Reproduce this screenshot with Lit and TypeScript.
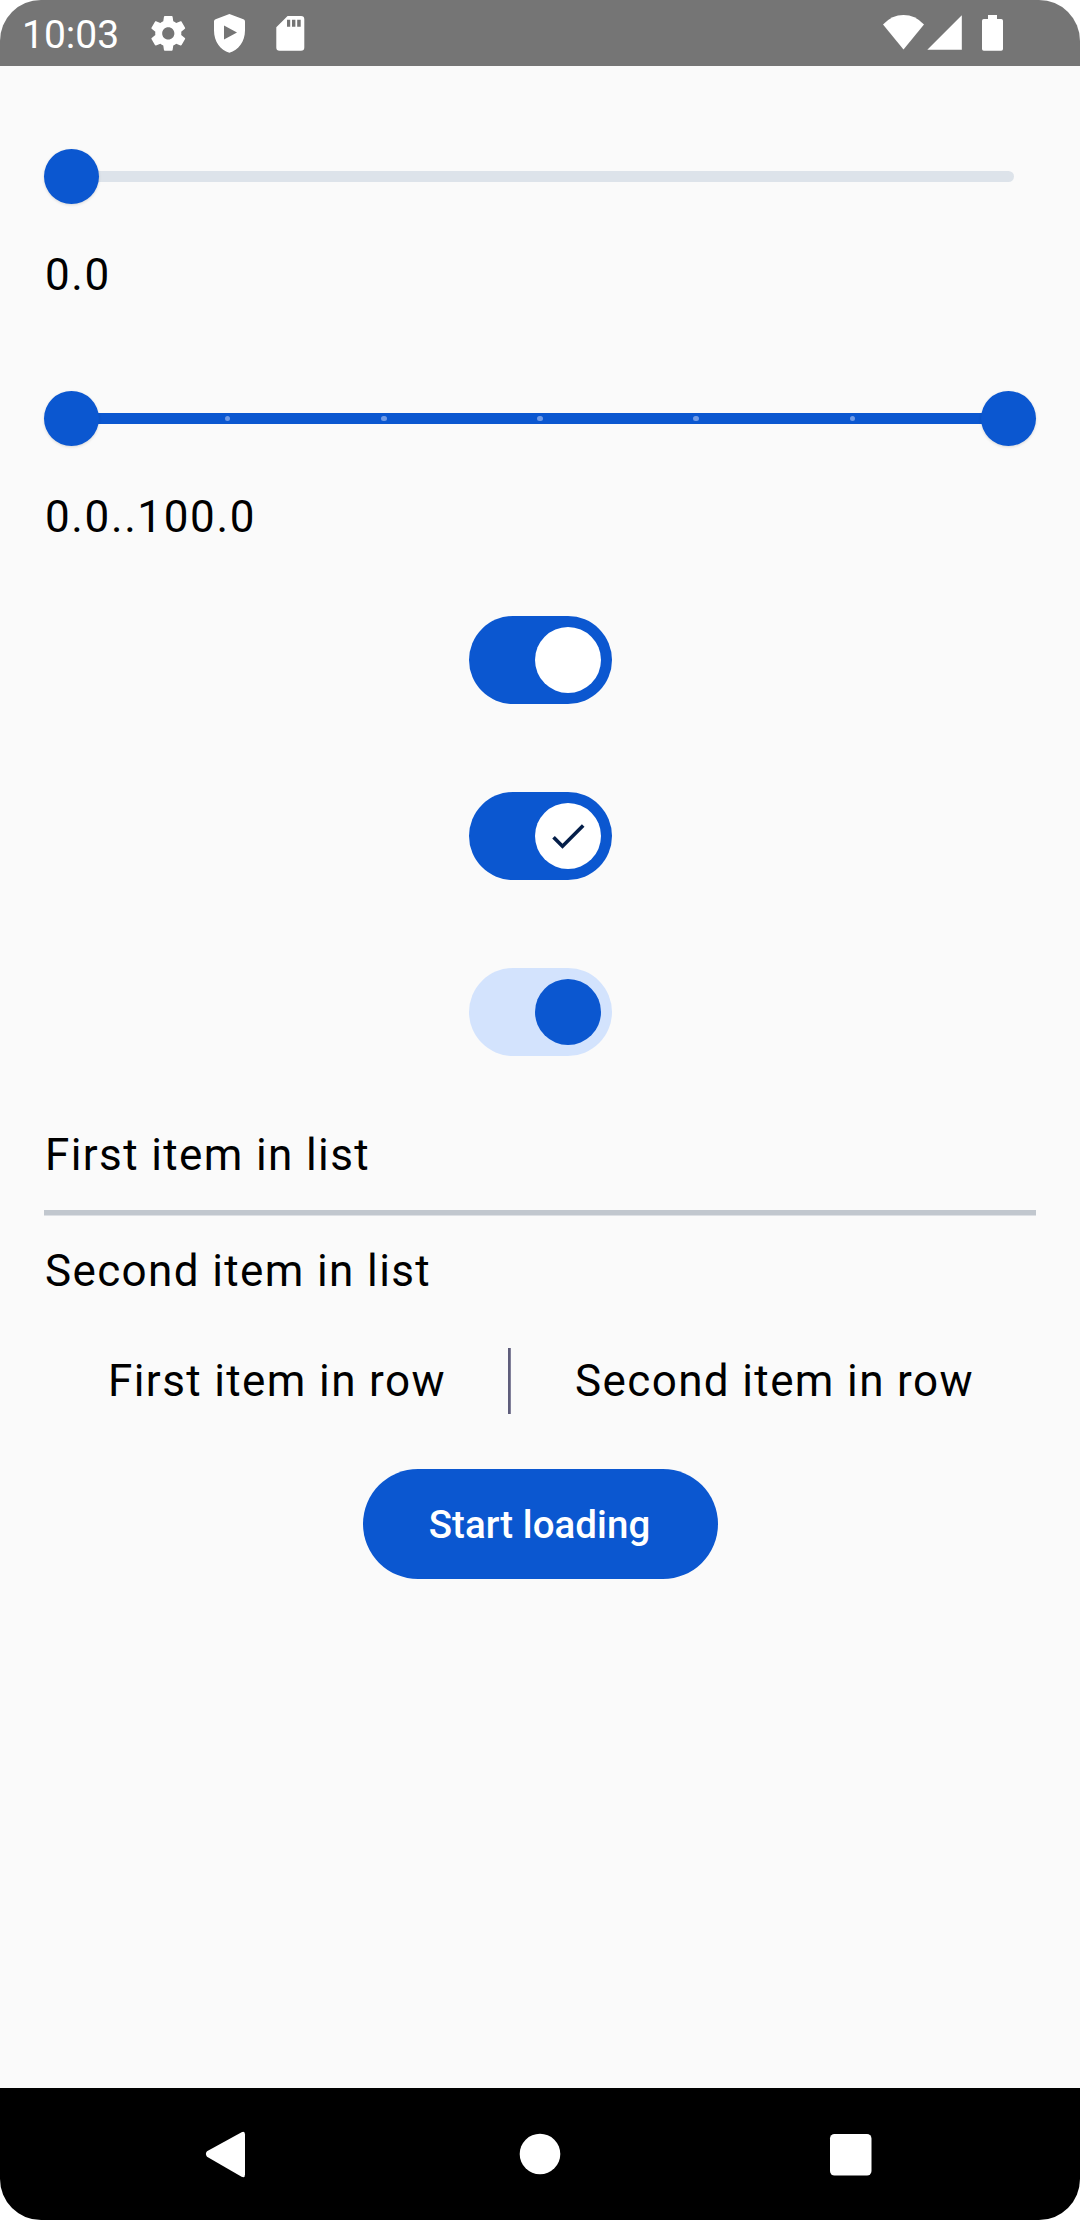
import { LitElement, html, css, svg, nothing } from "lit";
import { customElement, property } from "lit/decorators.js";

@customElement("status-bar")
class StatusBar extends LitElement {
  static styles = css`
    :host {
      display: flex;
      justify-content: space-between;
      height: 66px;
      background: #757575;
      color: #fff;
      padding: 0 76px 0 22px;
    }
    .group {
      display: flex;
      align-items: center;
    }
    .time {
      font-size: 39px;
      line-height: 60px;
      padding-top: 3px;
      width: 125px;
      white-space: nowrap;
    }
    svg {
      display: block;
      fill: #fff;
    }
  `;
  render() {
    return html`
      <div class="group">
        <span class="time">10:03</span>
        <svg width="165" height="66" viewBox="147 0 165 66">
          <path
            transform="translate(147.4 12.5) scale(1.74)"
            d="M19.43 12.98c.04-.32.07-.64.07-.98s-.03-.66-.07-.98l2.11-1.65c.19-.15.24-.42.12-.64l-2-3.46c-.12-.22-.39-.3-.61-.22l-2.49 1c-.52-.4-1.08-.73-1.69-.98l-.38-2.65C14.46 2.18 14.25 2 14 2h-4c-.25 0-.46.18-.49.42l-.38 2.65c-.61.25-1.17.59-1.69.98l-2.49-1c-.23-.09-.49 0-.61.22l-2 3.46c-.13.22-.07.49.12.64l2.11 1.65c-.04.32-.07.65-.07.98s.03.66.07.98l-2.11 1.65c-.19.15-.24.42-.12.64l2 3.46c.12.22.39.3.61.22l2.49-1c.52.4 1.08.73 1.69.98l.38 2.65c.03.24.24.42.49.42h4c.25 0 .46-.18.49-.42l.38-2.65c.61-.25 1.17-.59 1.69-.98l2.49 1c.23.09.49 0 .61-.22l2-3.46c.12-.22.07-.49-.12-.64l-2.11-1.65zM12 15.5c-1.93 0-3.5-1.57-3.5-3.5s1.57-3.5 3.5-3.5 3.5 1.57 3.5 3.5-1.57 3.5-3.5 3.5z"
          />
          <path
            fill-rule="evenodd"
            d="M229.4 14 L243.4 19.2 Q245 19.8 245 21.5 V30.5 C245 41.5 238.5 50 229.4 52.7 C220.3 50 214 41.5 214 30.5 V21.5 Q214 19.8 215.6 19.2 Z M224 25.6 V39.4 L237 32.5 Z"
          />
          <path
            fill-rule="evenodd"
            d="M287.6 16 H301 Q304.3 16 304.3 19.3 V47.4 Q304.3 50.7 301 50.7 H279.6 Q276.3 50.7 276.3 47.4 V27.3 Z M287 19.7 V26.7 H290.2 V19.7 Z M292 19.7 V26.7 H295.4 V19.7 Z M297.2 19.7 V26.7 H300.7 V19.7 Z"
          />
        </svg>
      </div>
      <svg width="124" height="66" viewBox="880 0 124 66">
        <path d="M903.5 49.6 L883 24.4 Q892 15 903.5 15 Q915 15 924 24.4 Z" />
        <path d="M961.8 15.3 V49.8 H927.3 Z" />
        <path
          d="M988 15 H997 V19 H1001.2 Q1003 19 1003 20.8 V48.9 Q1003 50.7 1001.2 50.7 H983.8 Q982 50.7 982 48.9 V20.8 Q982 19 983.8 19 H988 Z"
        />
      </svg>
    `;
  }
}

@customElement("ui-slider")
class UiSlider extends LitElement {
  @property({ type: Boolean }) range = false;
  @property({ type: Number }) steps = 0;

  static styles = css`
    :host {
      display: grid;
      height: 133px;
      margin-bottom: -1px;
      align-items: center;
    }
    .track,
    .ticks,
    .thumbs {
      grid-area: 1 / 1;
      display: flex;
      align-items: center;
    }
    .track {
      height: 11px;
      margin: 0 22px;
      border-radius: 5.5px;
      background: #dde3ea;
    }
    .track.active {
      background: #0b57d0;
    }
    .ticks {
      margin: 0 24.75px;
      justify-content: space-between;
    }
    .tick {
      width: 5.5px;
      height: 5.5px;
      border-radius: 50%;
      background: #6f9ae6;
    }
    .thumbs {
      justify-content: space-between;
      z-index: 1;
    }
    .thumb {
      width: 55px;
      height: 55px;
      border-radius: 50%;
      background: #0b57d0;
      box-shadow: 0 1px 3px rgba(0, 0, 0, 0.14);
    }
  `;
  render() {
    const ticks = this.steps ? Array.from({ length: this.steps + 2 }) : [];
    return html`
      <div class="track ${this.range ? "active" : ""}"></div>
      <div class="ticks">${ticks.map(() => html`<i class="tick"></i>`)}</div>
      <div class="thumbs">
        <div class="thumb"></div>
        ${this.range ? html`<div class="thumb"></div>` : nothing}
      </div>
    `;
  }
}

@customElement("ui-switch")
class UiSwitch extends LitElement {
  @property({ type: Boolean }) icon = false;
  @property({ type: Boolean }) tonal = false;

  static styles = css`
    :host {
      display: flex;
      justify-content: center;
      padding: 22px 0 22px 1px;
    }
    .track {
      box-sizing: border-box;
      width: 143px;
      height: 88px;
      padding: 11px;
      border-radius: 44px;
      background: #0b57d0;
      display: flex;
      justify-content: flex-end;
    }
    .thumb {
      width: 66px;
      height: 66px;
      border-radius: 50%;
      background: #fff;
      display: flex;
      align-items: center;
      justify-content: center;
    }
    .tonal {
      background: #d3e3fd;
    }
    .tonal .thumb {
      background: #0b57d0;
    }
    svg {
      width: 44px;
      height: 44px;
      fill: #041e49;
    }
  `;
  render() {
    return html`<div class="track ${this.tonal ? "tonal" : ""}">
      <div class="thumb">
        ${this.icon
          ? html`<svg viewBox="0 0 24 24">
              ${svg`<path d="M9 16.17 4.83 12l-1.42 1.41L9 19 21 7l-1.41-1.41z" />`}
            </svg>`
          : nothing}
      </div>
    </div>`;
  }
}

@customElement("nav-bar")
class NavBar extends LitElement {
  static styles = css`
    :host {
      display: flex;
      justify-content: center;
      height: 132px;
      background: #000;
    }
    svg {
      display: block;
      fill: #fff;
    }
  `;
  render() {
    return html`<svg width="1080" height="132" viewBox="0 0 1080 132">
      <path
        d="M207 63.3 L241.6 44.2 Q245 42.6 245 46.5 V86.5 Q245 90.4 241.6 88.8 L207 68.7 Q204.8 66 207 63.3 Z"
      />
      <circle cx="540" cy="66" r="20.3" />
      <rect x="830" y="46" width="41.5" height="41.5" rx="4.5" />
    </svg>`;
  }
}

@customElement("app-root")
class AppRoot extends LitElement {
  static styles = css`
    :host {
      display: flex;
      flex-direction: column;
      width: 1080px;
      height: 2220px;
      border-radius: 41px;
      overflow: hidden;
      background: #fafafa;
      color: #000;
      font-family: Roboto, sans-serif;
    }
    main {
      flex: 1;
      display: flex;
      flex-direction: column;
      gap: 44px;
      padding: 44px;
    }
    .text {
      font-size: 44px;
      line-height: 66px;
      letter-spacing: 1.375px;
      white-space: nowrap;
      padding-left: 1px;
      margin-right: -1px;
    }
    .value {
      letter-spacing: 1.62px;
    }
    .list {
      display: flex;
      flex-direction: column;
      gap: 22px;
    }
    .rule {
      height: 6px;
      background: linear-gradient(#c1c7ce 5px, #dde0e4 5px);
    }
    .row {
      display: flex;
      justify-content: space-evenly;
    }
    .bar {
      width: 3px;
      background: linear-gradient(90deg, #5e5d7b 2px, #82819a 2px);
    }
    .button {
      align-self: center;
      box-sizing: border-box;
      width: 355px;
      height: 110px;
      margin: 11px 0 11px 1px;
      padding: 0 2px 0 0;
      border: 0;
      border-radius: 55px;
      background: #0b57d0;
      color: #fff;
      font: 500 38.5px/55px Roboto, sans-serif;
      letter-spacing: 0.05px;
    }
  `;
  render() {
    return html`
      <status-bar></status-bar>
      <main>
        <div>
          <ui-slider></ui-slider>
          <div class="text value">0.0</div>
        </div>
        <div>
          <ui-slider range steps="5"></ui-slider>
          <div class="text value">0.0..100.0</div>
        </div>
        <ui-switch></ui-switch>
        <ui-switch icon></ui-switch>
        <ui-switch tonal></ui-switch>
        <div class="list">
          <div class="text">First item in list</div>
          <div class="rule"></div>
          <div class="text">Second item in list</div>
        </div>
        <div class="row">
          <span class="text">First item in row</span>
          <span class="bar"></span>
          <span class="text">Second item in row</span>
        </div>
        <button class="button">Start loading</button>
      </main>
      <nav-bar></nav-bar>
    `;
  }
}
